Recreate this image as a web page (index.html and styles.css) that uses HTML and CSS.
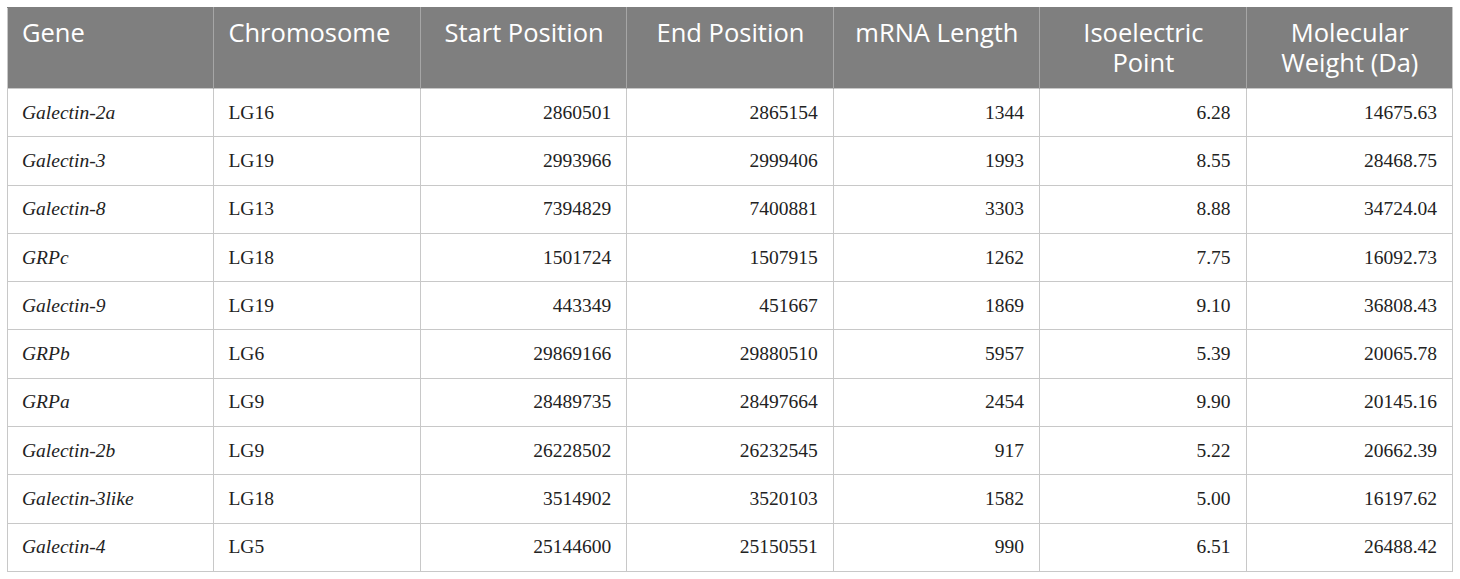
FILE: index.html
```html
<!DOCTYPE html>
<html lang="en">
<head>
<meta charset="utf-8">
<title>Galectin genes</title>
<link rel="stylesheet" href="styles.css">
</head>
<body>
<table class="data">
  <colgroup>
    <col class="c"><col class="c"><col class="c"><col class="c"><col class="c"><col class="c"><col class="c">
  </colgroup>
  <thead>
    <tr>
      <th class="l">Gene</th>
      <th class="l">Chromosome</th>
      <th>Start Position</th>
      <th>End Position</th>
      <th>mRNA Length</th>
      <th>Isoelectric<br>Point</th>
      <th>Molecular<br>Weight (Da)</th>
    </tr>
  </thead>
  <tbody>
    <tr><td class="g">Galectin-2a</td><td class="t">LG16</td><td>2860501</td><td>2865154</td><td>1344</td><td>6.28</td><td>14675.63</td></tr>
    <tr><td class="g">Galectin-3</td><td class="t">LG19</td><td>2993966</td><td>2999406</td><td>1993</td><td>8.55</td><td>28468.75</td></tr>
    <tr><td class="g">Galectin-8</td><td class="t">LG13</td><td>7394829</td><td>7400881</td><td>3303</td><td>8.88</td><td>34724.04</td></tr>
    <tr><td class="g">GRPc</td><td class="t">LG18</td><td>1501724</td><td>1507915</td><td>1262</td><td>7.75</td><td>16092.73</td></tr>
    <tr><td class="g">Galectin-9</td><td class="t">LG19</td><td>443349</td><td>451667</td><td>1869</td><td>9.10</td><td>36808.43</td></tr>
    <tr><td class="g">GRPb</td><td class="t">LG6</td><td>29869166</td><td>29880510</td><td>5957</td><td>5.39</td><td>20065.78</td></tr>
    <tr><td class="g">GRPa</td><td class="t">LG9</td><td>28489735</td><td>28497664</td><td>2454</td><td>9.90</td><td>20145.16</td></tr>
    <tr><td class="g">Galectin-2b</td><td class="t">LG9</td><td>26228502</td><td>26232545</td><td>917</td><td>5.22</td><td>20662.39</td></tr>
    <tr><td class="g">Galectin-3like</td><td class="t">LG18</td><td>3514902</td><td>3520103</td><td>1582</td><td>5.00</td><td>16197.62</td></tr>
    <tr><td class="g">Galectin-4</td><td class="t">LG5</td><td>25144600</td><td>25150551</td><td>990</td><td>6.51</td><td>26488.42</td></tr>
  </tbody>
</table>
</body>
</html>
```
FILE: styles.css
```css
html, body {
  margin: 0;
  padding: 0;
  background: #fff;
}
body {
  padding: 7px;
}
.data {
  width: 1446px;
  table-layout: fixed;
  border-collapse: collapse;
  border: 1px solid #c8c8c8;
}
.data th {
  background: #7f7f7f;
  color: #fff;
  font-family: "Open Sans", "Noto Sans", sans-serif;
  font-weight: 400;
  font-size: 25.5px;
  line-height: 30px;
  text-align: center;
  vertical-align: top;
  padding: 9px 13px 10px 14px;
  height: 81px;
  box-sizing: border-box;
  border-left: 1px solid #a6a6a6;
  border-right: 1px solid #a6a6a6;
  border-top: 1px solid #7f7f7f;
}
.data th:first-child { border-left-color: #c8c8c8; }
.data th:last-child { border-right-color: #c8c8c8; }
.data th.l { text-align: left; }
.data td {
  font-family: "Liberation Serif", "Times New Roman", serif;
  font-size: 19.5px;
  color: #222;
  text-align: right;
  vertical-align: middle;
  padding: 0 15px 0 14px;
  height: 48.3px;
  box-sizing: border-box;
  border: 1px solid #c8c8c8;
}
.data td.g { text-align: left; font-style: italic; }
.data td.t { text-align: left; }
```
